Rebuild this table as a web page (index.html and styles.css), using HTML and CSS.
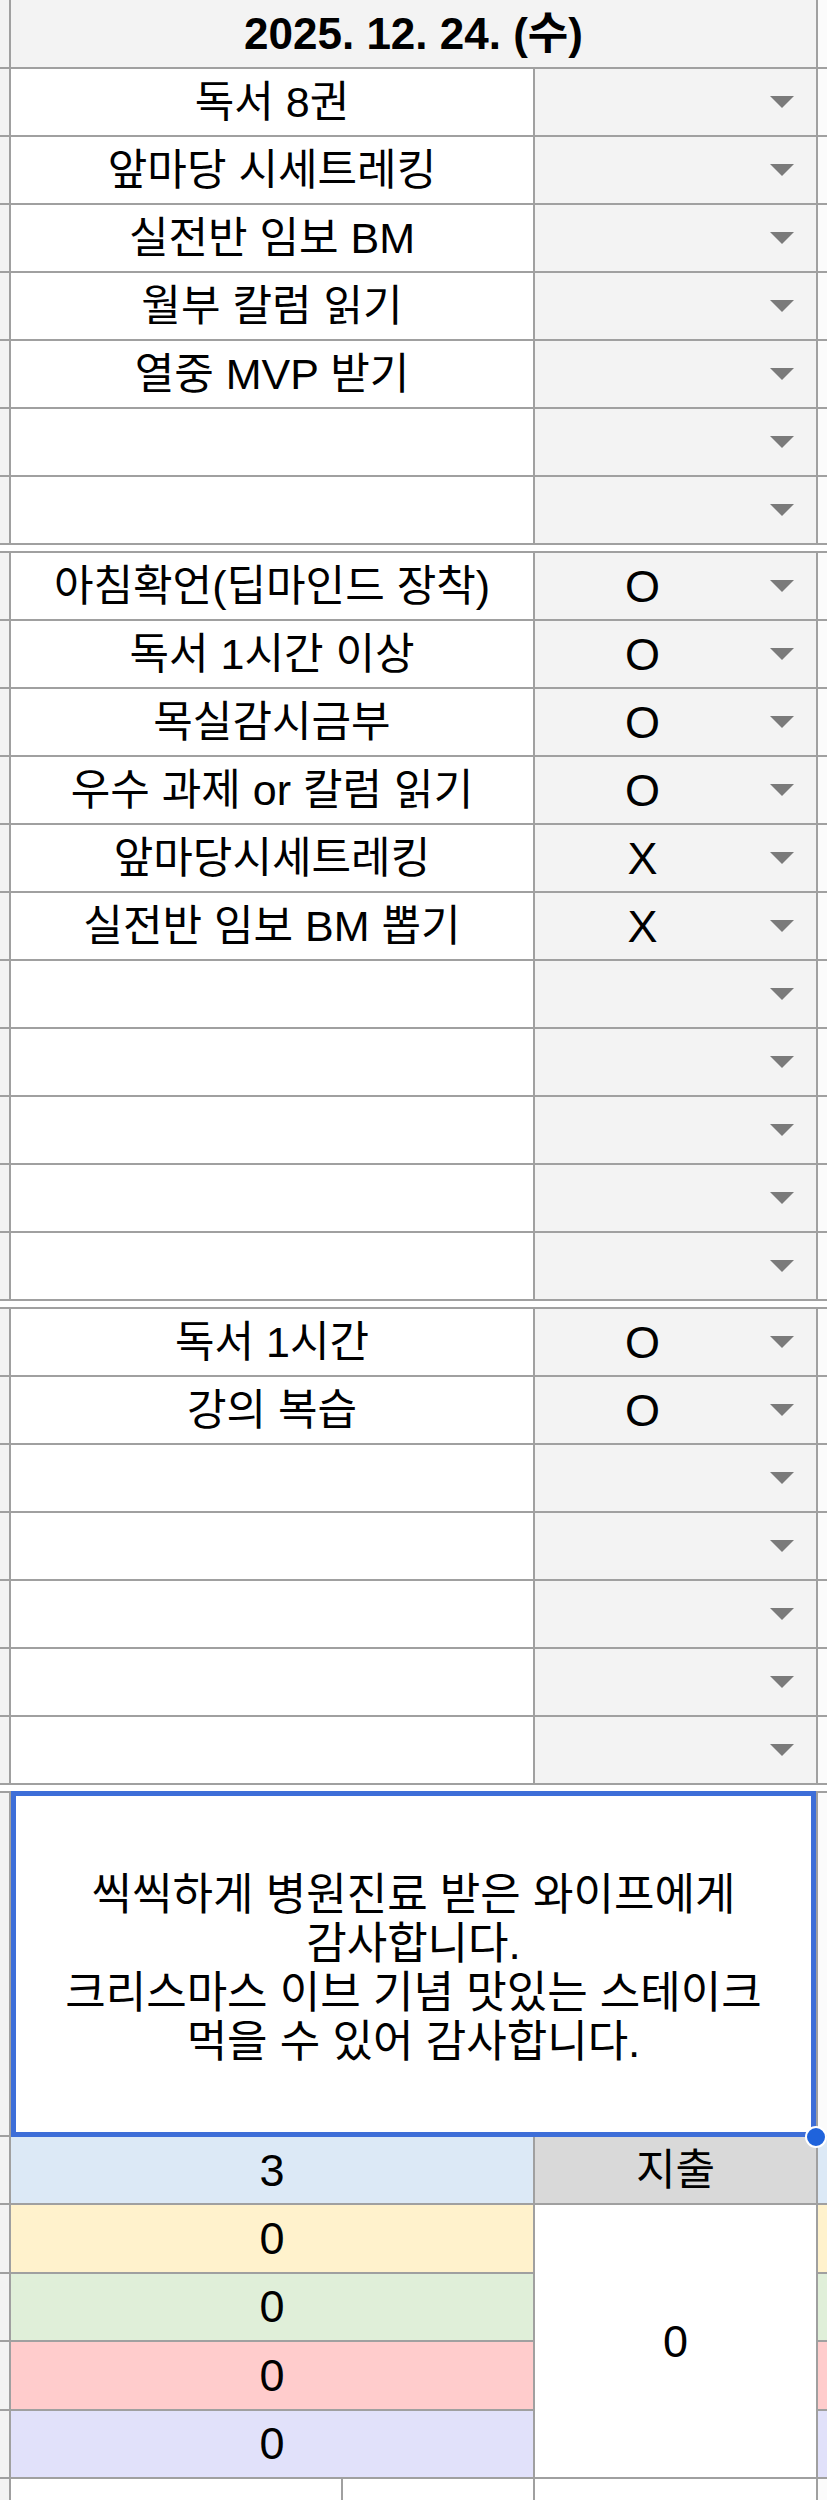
FILE: index.html
```html
<!DOCTYPE html>
<html lang="ko">
<head>
<meta charset="utf-8">
<title>Sheet</title>
<link rel="stylesheet" href="styles.css">
</head>
<body>
<div class="sheet">
  <div class="row head">
    <div class="gut"></div>
    <div class="cell span2 bold">2025. 12. 24. (수)</div>
    <div class="edge"></div>
  </div>

  <div class="row"><div class="gut"></div><div class="cell a">독서 8권</div><div class="cell b"><span class="val"></span></div><div class="edge"></div></div>
  <div class="row"><div class="gut"></div><div class="cell a">앞마당 시세트레킹</div><div class="cell b"><span class="val"></span></div><div class="edge"></div></div>
  <div class="row"><div class="gut"></div><div class="cell a">실전반 임보 BM</div><div class="cell b"><span class="val"></span></div><div class="edge"></div></div>
  <div class="row"><div class="gut"></div><div class="cell a">월부 칼럼 읽기</div><div class="cell b"><span class="val"></span></div><div class="edge"></div></div>
  <div class="row"><div class="gut"></div><div class="cell a">열중 MVP 받기</div><div class="cell b"><span class="val"></span></div><div class="edge"></div></div>
  <div class="row"><div class="gut"></div><div class="cell a"></div><div class="cell b"><span class="val"></span></div><div class="edge"></div></div>
  <div class="row"><div class="gut"></div><div class="cell a"></div><div class="cell b"><span class="val"></span></div><div class="edge"></div></div>
  <div class="sep"></div>

  <div class="row"><div class="gut"></div><div class="cell a">아침확언(딥마인드 장착)</div><div class="cell b"><span class="val">O</span></div><div class="edge"></div></div>
  <div class="row"><div class="gut"></div><div class="cell a">독서 1시간 이상</div><div class="cell b"><span class="val">O</span></div><div class="edge"></div></div>
  <div class="row"><div class="gut"></div><div class="cell a">목실감시금부</div><div class="cell b"><span class="val">O</span></div><div class="edge"></div></div>
  <div class="row"><div class="gut"></div><div class="cell a">우수 과제 or 칼럼 읽기</div><div class="cell b"><span class="val">O</span></div><div class="edge"></div></div>
  <div class="row"><div class="gut"></div><div class="cell a">앞마당시세트레킹</div><div class="cell b"><span class="val">X</span></div><div class="edge"></div></div>
  <div class="row"><div class="gut"></div><div class="cell a">실전반 임보 BM 뽑기</div><div class="cell b"><span class="val">X</span></div><div class="edge"></div></div>
  <div class="row"><div class="gut"></div><div class="cell a"></div><div class="cell b"><span class="val"></span></div><div class="edge"></div></div>
  <div class="row"><div class="gut"></div><div class="cell a"></div><div class="cell b"><span class="val"></span></div><div class="edge"></div></div>
  <div class="row"><div class="gut"></div><div class="cell a"></div><div class="cell b"><span class="val"></span></div><div class="edge"></div></div>
  <div class="row"><div class="gut"></div><div class="cell a"></div><div class="cell b"><span class="val"></span></div><div class="edge"></div></div>
  <div class="row"><div class="gut"></div><div class="cell a"></div><div class="cell b"><span class="val"></span></div><div class="edge"></div></div>
  <div class="sep"></div>

  <div class="row"><div class="gut"></div><div class="cell a">독서 1시간</div><div class="cell b"><span class="val">O</span></div><div class="edge"></div></div>
  <div class="row"><div class="gut"></div><div class="cell a">강의 복습</div><div class="cell b"><span class="val">O</span></div><div class="edge"></div></div>
  <div class="row"><div class="gut"></div><div class="cell a"></div><div class="cell b"><span class="val"></span></div><div class="edge"></div></div>
  <div class="row"><div class="gut"></div><div class="cell a"></div><div class="cell b"><span class="val"></span></div><div class="edge"></div></div>
  <div class="row"><div class="gut"></div><div class="cell a"></div><div class="cell b"><span class="val"></span></div><div class="edge"></div></div>
  <div class="row"><div class="gut"></div><div class="cell a"></div><div class="cell b"><span class="val"></span></div><div class="edge"></div></div>
  <div class="row"><div class="gut"></div><div class="cell a"></div><div class="cell b"><span class="val"></span></div><div class="edge"></div></div>
  <div class="sep"></div>

  <div class="row note-row">
    <div class="gut"></div>
    <div class="cell span2 note">씩씩하게 병원진료 받은 와이프에게<br>감사합니다.<br>크리스마스 이브 기념 맛있는 스테이크<br>먹을 수 있어 감사합니다.<span class="handle"></span></div>
    <div class="edge"></div>
  </div>

  <div class="summary">
    <div class="gut r1"></div>
    <div class="cell sa c-blue r1 num">3</div>
    <div class="cell sb c-gray r1">지출</div>
    <div class="edge c-blue r1"></div>

    <div class="gut r2"></div>
    <div class="cell sa c-yellow r2 num">0</div>
    <div class="cell total num">0</div>
    <div class="edge c-yellow r2"></div>

    <div class="gut r3"></div>
    <div class="cell sa c-green r3 num">0</div>
    <div class="edge c-green r3"></div>

    <div class="gut r4"></div>
    <div class="cell sa c-red r4 num">0</div>
    <div class="edge c-red r4"></div>

    <div class="gut r5"></div>
    <div class="cell sa c-purple r5 num">0</div>
    <div class="edge c-purple r5"></div>

    <div class="gut r6"></div>
    <div class="cell a1 r6"></div>
    <div class="cell a2 r6"></div>
    <div class="cell sb r6"></div>
    <div class="edge r6"></div>
  </div>
</div>
</body>
</html>
```

FILE: styles.css
```css
* { box-sizing: border-box; }

html, body {
  margin: 0;
  padding: 0;
  background: #ffffff;
}

body {
  font-family: "Liberation Sans", "Noto Sans CJK KR", sans-serif;
  font-size: 43px;
  line-height: 1;
  color: #000;
  width: 827px;
  height: 2500px;
  overflow: hidden;
}

.sheet {
  width: 827px;
}

.row {
  display: grid;
  grid-template-columns: 11px 524px 283px 9px;
  height: 68px;
  border-bottom: 2px solid #a0a0a0;
}

.row.head {
  height: 69px;
  background: #f3f3f3;
}

.gut {
  background: #f3f3f3;
  border-right: 2px solid #a0a0a0;
}

.edge {
  background: #fbfbfb;
}

.cell {
  border-right: 2px solid #a0a0a0;
  display: flex;
  align-items: center;
  justify-content: center;
  white-space: nowrap;
}

.span2 {
  grid-column: 2 / 4;
}

.bold {
  font-weight: bold;
  font-size: 44px;
  background: #f3f3f3;
}

.a {
  background: #ffffff;
}

.b {
  background: #f3f3f3;
  justify-content: flex-start;
}

.b .val {
  flex: 1;
  text-align: center;
  font-size: 45px;
}

.b::after {
  content: "";
  width: 0;
  height: 0;
  margin-left: 20px;
  margin-right: 22px;
  border-left: 12px solid transparent;
  border-right: 12px solid transparent;
  border-top: 12px solid #7a7a7a;
}

.sep {
  height: 8px;
  background: #ffffff;
  border-bottom: 2px solid #a0a0a0;
}

.note-row {
  height: 344px;
  position: relative;
  z-index: 2;
}

.note {
  position: relative;
  background: #ffffff;
  white-space: normal;
  text-align: center;
  font-size: 44px;
  line-height: 49px;
  padding-top: 8px;
}

.note::after {
  content: "";
  position: absolute;
  top: -2px;
  left: 0;
  right: 0;
  bottom: -2px;
  border: 5px solid #3d6ed8;
  pointer-events: none;
}

.handle {
  position: absolute;
  right: -11px;
  bottom: -13px;
  width: 22px;
  height: 22px;
  border-radius: 50%;
  background: #1f63dc;
  border: 2px solid #ffffff;
  z-index: 3;
}

.summary {
  display: grid;
  grid-template-columns: 11px 332px 192px 283px 9px;
  grid-template-rows: 68px 68.5px 68.5px 68.5px 68.5px 68px;
}

.summary .gut {
  grid-column: 1;
  border-bottom: 2px solid #a0a0a0;
}

.summary .cell {
  border-bottom: 2px solid #a0a0a0;
}

.summary .edge {
  grid-column: 5;
  border-bottom: 2px solid #a0a0a0;
}

.num {
  font-size: 45px;
}

.r1 { grid-row: 1; }
.r2 { grid-row: 2; }
.r3 { grid-row: 3; }
.r4 { grid-row: 4; }
.r5 { grid-row: 5; }
.r6 { grid-row: 6; }

.sa { grid-column: 2 / 4; }
.sb { grid-column: 4; }
.a1 { grid-column: 2; background: #fff; }
.a2 { grid-column: 3; background: #fff; }

.total {
  grid-column: 4;
  grid-row: 2 / 6;
  background: #ffffff;
}

.c-blue { background: #dce9f6; }
.c-gray { background: #d9d9d9; }
.c-yellow { background: #fff2cc; }
.c-green { background: #e0efd9; }
.c-red { background: #ffcccc; }
.c-purple { background: #e1e1fa; }
```
